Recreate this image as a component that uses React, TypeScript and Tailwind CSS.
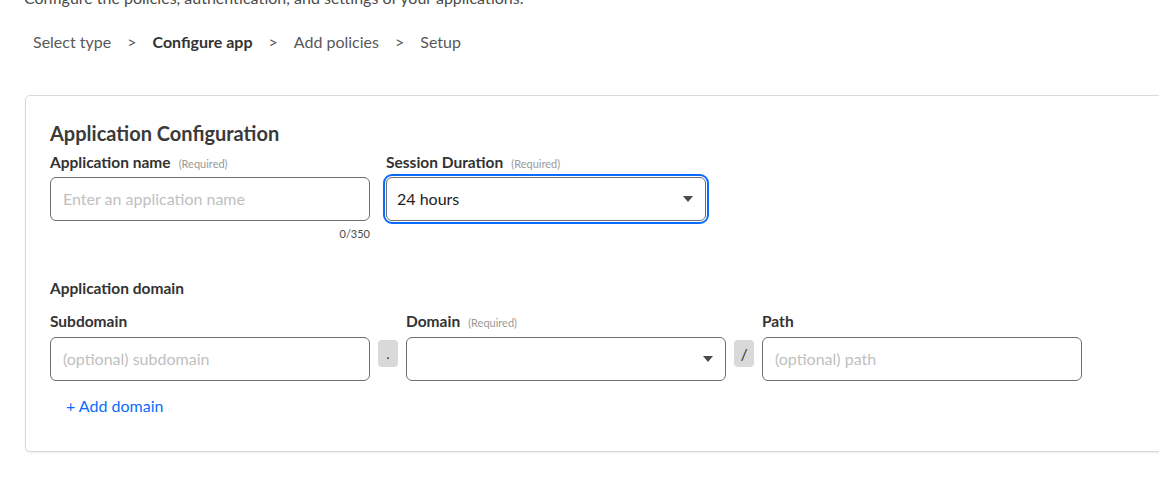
import React from "react";

function Caret() {
  return (
    <svg width="10" height="6" viewBox="0 0 10 6" className="shrink-0">
      <path d="M0 0 L10 0 L5 6 Z" fill="#4a4a4a" />
    </svg>
  );
}

function Label({ text, required }: { text: string; required?: boolean }) {
  return (
    <div className="flex items-baseline h-[22px]">
      <span className="text-[15.5px] font-bold text-[#333333]">{text}</span>
      {required && <span className="ml-2 text-[11px] text-[#9a9a9a]">(Required)</span>}
    </div>
  );
}

export default function App() {
  return (
    <div className="w-[1159px] h-[483px] overflow-hidden bg-white text-[#333333]" style={{ fontFamily: "Lato, 'Noto Sans', sans-serif" }}>
      <div className="pl-[24px] -mt-[14px] text-[16px] leading-[24px] text-[#4a4a4a] whitespace-nowrap">
        Configure the policies, authentication, and settings of your applications.
      </div>
      <div className="flex items-center pl-[33px] mt-[20px] h-[24px] text-[16px] text-[#595959] whitespace-nowrap">
        <span>Select type</span>
        <span className="mx-[16px]">&gt;</span>
        <span className="font-bold text-[#333333]">Configure app</span>
        <span className="mx-[16px]">&gt;</span>
        <span>Add policies</span>
        <span className="mx-[16px]">&gt;</span>
        <span>Setup</span>
      </div>
      <div className="ml-[25px] mt-[41px] w-[1160px] h-[357px] border border-[#d9d9d9] rounded-[5px] shadow-[0_1px_2px_rgba(0,0,0,0.08)] pl-[24px] pt-[23px]">
        <h2 className="text-[20px] leading-[28px] font-bold text-[#3a3a3a]">Application Configuration</h2>
        <div className="flex gap-[16px] mt-[4px]">
          <div className="w-[320px]">
            <Label text="Application name" required />
            <div className="mt-[4px] h-[44px] border border-[#6e6e6e] rounded-[6px] flex items-center px-[12px] text-[16px] text-[#c0c0c0]">
              Enter an application name
            </div>
            <div className="text-right text-[11px] text-[#4a4a4a] mt-[6px] leading-[14px]">0/350</div>
          </div>
          <div className="w-[320px]">
            <Label text="Session Duration" required />
            <div className="mt-[4px] h-[44px] border border-[#6e6e6e] rounded-[6px] flex items-center justify-between pl-[10px] pr-[12px] text-[16px] text-[#222222] outline-2 outline-offset-1 outline-[#0a6cff]">
              <span>24 hours</span>
              <Caret />
            </div>
          </div>
        </div>
        <div className="mt-[36px] text-[15.5px] font-bold text-[#333333] h-[22px]">Application domain</div>
        <div className="flex gap-[8px] mt-[11px]">
          <div className="w-[320px]">
            <Label text="Subdomain" />
            <div className="mt-[5px] h-[44px] border border-[#6e6e6e] rounded-[6px] flex items-center px-[12px] text-[16px] text-[#c0c0c0]">
              (optional) subdomain
            </div>
          </div>
          <div className="w-[20px] h-[27px] mt-[30px] bg-[#d9d9d9] rounded-[4px] flex items-end justify-center pb-[6px] text-[14px] leading-none text-[#333333]">.</div>
          <div className="w-[320px]">
            <Label text="Domain" required />
            <div className="mt-[5px] h-[44px] border border-[#6e6e6e] rounded-[6px] flex items-center justify-end pr-[12px]">
              <Caret />
            </div>
          </div>
          <div className="w-[20px] h-[27px] mt-[30px] bg-[#d9d9d9] rounded-[4px] flex items-center justify-center text-[16px] leading-none text-[#333333]">/</div>
          <div className="w-[320px]">
            <Label text="Path" />
            <div className="mt-[5px] h-[44px] border border-[#6e6e6e] rounded-[6px] flex items-center px-[12px] text-[16px] text-[#c0c0c0]">
              (optional) path
            </div>
          </div>
        </div>
        <div className="mt-[13px] ml-[16px] text-[16px] text-[#0a6cff] h-[24px] leading-[24px]">+ Add domain</div>
      </div>
    </div>
  );
}
